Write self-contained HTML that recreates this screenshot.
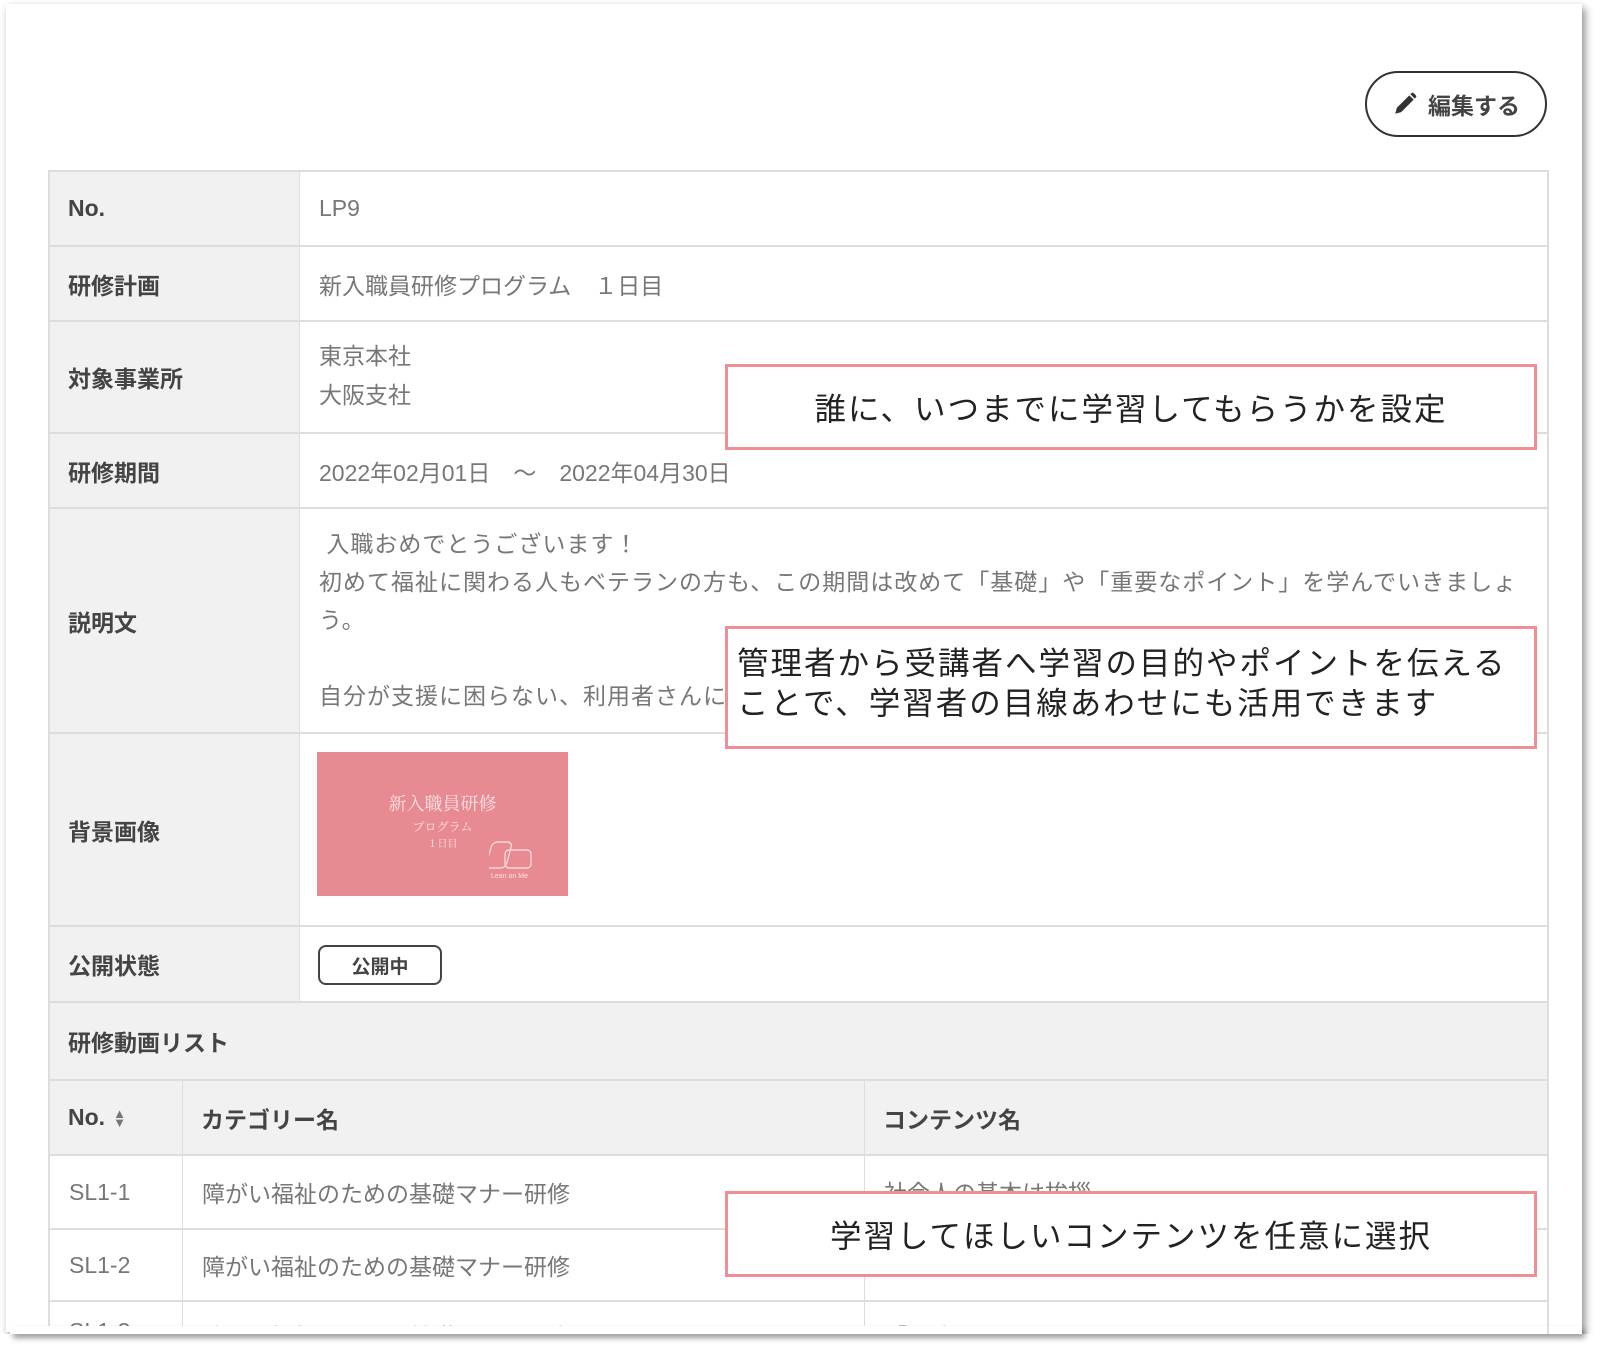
<!DOCTYPE html>
<html><head><meta charset="utf-8">
<style>
*{margin:0;padding:0;box-sizing:border-box}
body{width:1600px;height:1350px;background:#fff;font-family:"Liberation Sans","Noto Sans CJK JP",sans-serif;position:relative;overflow:hidden}
.card{position:absolute;left:6px;top:4px;width:1576px;height:1328px;background:#fff;box-shadow:3px 4px 8px rgba(0,0,0,.45);overflow:hidden}
.a{position:absolute}
.lab{position:absolute;background:#f1f1f1;color:#444;font-weight:bold;font-size:23px;padding-left:18px;display:flex;align-items:center;border-bottom:2px solid #ddd;border-right:1px solid #ddd}
.val{position:absolute;color:#777;font-size:23px;padding-left:19px;display:flex;align-items:center;border-bottom:2px solid #ddd}
.call{position:absolute;border:3px solid #ef8e94;background:#fff;color:#222;font-size:31.5px;letter-spacing:2px}
</style></head><body>
<div class="card">
 <div class="a" style="left:1359px;top:67px;width:182px;height:66px;border:2px solid #333;border-radius:33px;display:flex;align-items:center;justify-content:center;font-size:23px;font-weight:bold;color:#444">
  <svg width="26" height="26" viewBox="0 0 24 24" style="margin-right:10px"><path d="M3 21l1.5-5.5L16 4l4 4L8.5 19.5z" fill="#333"/><path d="M17 3l4 4 1-1a1.5 1.5 0 000-2l-2-2a1.5 1.5 0 00-2 0z" fill="#333"/></svg>編集する</div>
 <div class="a" style="left:42px;top:166px;width:1501px;height:1200px;border:2px solid #ddd;border-bottom:none"></div>
</div>
<div class="lab" style="left:50px;top:172px;width:250px;height:75px">No.</div>
<div class="val" style="left:300px;top:172px;width:1247px;height:75px">LP9</div>
<div class="lab" style="left:50px;top:247px;width:250px;height:75px">研修計画</div>
<div class="val" style="left:300px;top:247px;width:1247px;height:75px">新入職員研修プログラム　１日目</div>
<div class="lab" style="left:50px;top:322px;width:250px;height:112px">対象事業所</div>
<div class="val" style="left:300px;top:322px;width:1247px;height:112px;line-height:39px;align-items:flex-start;padding-top:15px">東京本社<br>大阪支社</div>
<div class="lab" style="left:50px;top:434px;width:250px;height:75px">研修期間</div>
<div class="val" style="left:300px;top:434px;width:1247px;height:75px">2022年02月01日　～　2022年04月30日</div>
<div class="lab" style="left:50px;top:509px;width:250px;height:225px">説明文</div>
<div class="val" style="left:300px;top:509px;width:1247px;height:225px;display:block;padding-top:16px;line-height:38px;letter-spacing:1px;white-space:nowrap;overflow:hidden">&nbsp;入職おめでとうございます！<br>初めて福祉に関わる人もベテランの方も、この期間は改めて「基礎」や「重要なポイント」を学んでいきましょ<br>う。<br><br>自分が支援に困らない、利用者さんに</div>
<div class="lab" style="left:50px;top:734px;width:250px;height:193px">背景画像</div>
<div class="val" style="left:300px;top:734px;width:1247px;height:193px"></div>
<div class="a" style="left:317px;top:752px;width:251px;height:144px;background:#e88a92;color:#fbe3e5;text-align:center;font-family:'Noto Serif CJK SC',serif">
 <div style="margin-top:38px;font-size:18px">新入職員研修</div>
 <div style="font-size:12px;margin-top:2px">プログラム</div>
 <div style="font-size:10px">１日目</div>
 <svg class="a" style="left:172px;top:88px" width="52" height="40" viewBox="0 0 52 40"><rect x="4" y="2" width="20" height="26" rx="5" fill="none" stroke="#fbe3e5" stroke-width="1.2" transform="skewX(-15)"/><rect x="16" y="10" width="26" height="18" rx="4" fill="none" stroke="#fbe3e5" stroke-width="1.2"/><text x="2" y="38" font-size="7" fill="#fbe3e5" font-family="Liberation Sans">Lean on Me</text></svg>
</div>
<div class="lab" style="left:50px;top:927px;width:250px;height:76px">公開状態</div>
<div class="val" style="left:300px;top:927px;width:1247px;height:76px"></div>
<div class="a" style="left:318px;top:945px;width:124px;height:40px;border:2px solid #444;border-radius:8px;font-size:19px;font-weight:bold;color:#444;display:flex;align-items:center;justify-content:center">公開中</div>
<div class="lab" style="left:50px;top:1003px;width:1497px;height:78px;border-right:none">研修動画リスト</div>
<div class="lab" style="left:50px;top:1081px;width:133px;height:75px">No. <span style="font-size:13px;color:#777;margin-left:8px;line-height:9px">▲<br>▼</span></div>
<div class="lab" style="left:183px;top:1081px;width:682px;height:75px">カテゴリー名</div>
<div class="lab" style="left:865px;top:1081px;width:682px;height:75px;border-right:none">コンテンツ名</div>
<div class="val" style="left:50px;top:1156px;width:133px;height:74px;border-right:1px solid #ddd">SL1-1</div>
<div class="val" style="left:183px;top:1156px;width:682px;height:74px;border-right:1px solid #ddd">障がい福祉のための基礎マナー研修</div>
<div class="val" style="left:865px;top:1156px;width:682px;height:74px;align-items:flex-start;padding-top:18px">社会人の基本は挨拶</div>
<div class="val" style="left:50px;top:1230px;width:133px;height:72px;border-right:1px solid #ddd">SL1-2</div>
<div class="val" style="left:183px;top:1230px;width:682px;height:72px;border-right:1px solid #ddd">障がい福祉のための基礎マナー研修</div>
<div class="val" style="left:865px;top:1230px;width:682px;height:72px"></div>
<div class="val" style="left:50px;top:1302px;width:133px;height:32px;border-right:1px solid #ddd;align-items:flex-start;padding-top:16px">SL1-3</div>
<div class="val" style="left:183px;top:1302px;width:682px;height:32px;border-right:1px solid #ddd;align-items:flex-start;padding-top:16px">障がい福祉のための基礎マナー研修</div>
<div class="val" style="left:865px;top:1302px;width:682px;height:32px;align-items:flex-start;padding-top:16px">「10大ちょっとの用語とは？</div>
<div class="a" style="left:0;top:1334px;width:1600px;height:16px;background:#fff"></div>
<div class="a" style="left:10px;top:1326px;width:1572px;height:8px;box-shadow:3px 4px 6px rgba(0,0,0,.4);background:#fff"></div>
<div class="a" style="left:1547px;top:170px;width:2px;height:1164px;background:#ddd"></div>
<div class="call" style="left:725px;top:364px;width:812px;height:86px;display:flex;align-items:center;justify-content:center">誰に、いつまでに学習してもらうかを設定</div>
<div class="call" style="left:725px;top:626px;width:812px;height:123px;padding:14px 0 0 9px;line-height:40px">管理者から受講者へ学習の目的やポイントを伝える<br>ことで、学習者の目線あわせにも活用できます</div>
<div class="call" style="left:725px;top:1191px;width:812px;height:86px;display:flex;align-items:center;justify-content:center">学習してほしいコンテンツを任意に選択</div>
</body></html>
